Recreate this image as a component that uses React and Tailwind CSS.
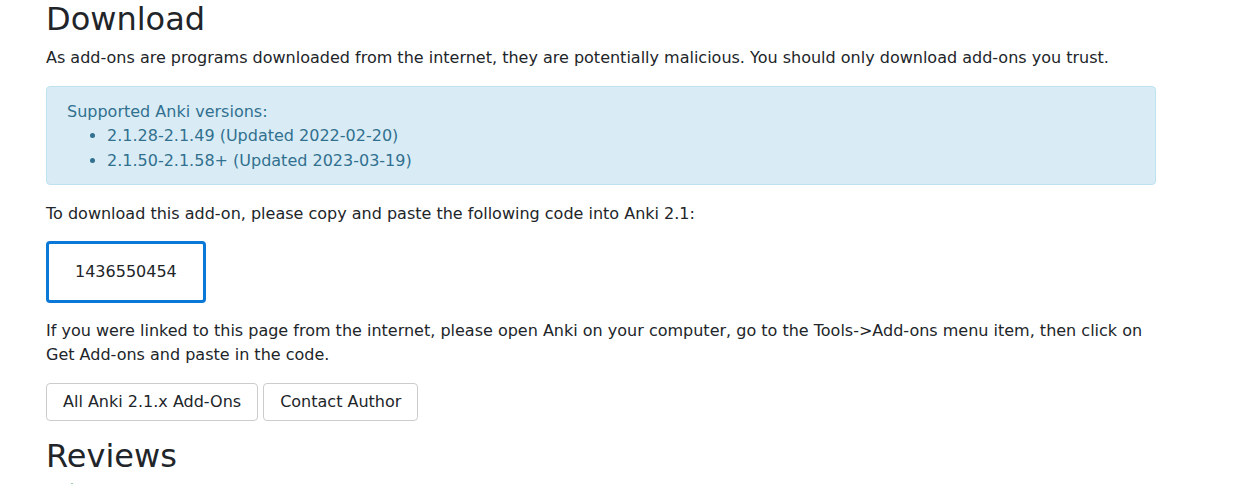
export default function App() {
  return (
    <div className="bg-white min-h-screen text-[#212529] text-[16px] leading-6" style={{ fontFamily: '"DejaVu Sans", sans-serif' }}>
      <div className="ml-[46px] w-[1110px]">
        <h2 className="text-[32px] leading-[38.4px] font-normal mb-2">Download</h2>
        <p className="mb-4">
          As add-ons are programs downloaded from the internet, they are potentially malicious. You should only download add-ons you trust.
        </p>
        <div className="bg-[#d9ecf5] border border-[#bee2f0] text-[#31708f] rounded px-5 pt-[13px] pb-[11px] mb-[17px]">
          <div>Supported Anki versions:</div>
          <ul className="list-disc pl-10 mb-0">
            <li className="leading-[24.5px]">2.1.28-2.1.49 (Updated 2022-02-20)</li>
            <li className="leading-[24.5px]">2.1.50-2.1.58+ (Updated 2023-03-19)</li>
          </ul>
        </div>
        <p className="mb-[15px]">To download this add-on, please copy and paste the following code into Anki 2.1:</p>
        <div className="inline-block border-[3px] border-[#0a78d7] rounded px-[26px] py-4 mb-4">1436550454</div>
        <p className="mb-4">
          If you were linked to this page from the internet, please open Anki on your computer, go to the Tools-&gt;Add-ons menu item, then click on Get Add-ons and paste in the code.
        </p>
        <div className="flex gap-[5px] mb-4">
          <button className="border border-[#cccccc] rounded px-4 py-[6px] leading-6 bg-white text-[#212529]">All Anki 2.1.x Add-Ons</button>
          <button className="border border-[#cccccc] rounded px-4 py-[6px] leading-6 bg-white text-[#212529]">Contact Author</button>
        </div>
        <h2 className="text-[32px] leading-[38.4px] font-normal mb-2">Reviews</h2>
        <div className="pl-[22px]">
          <svg width="8" height="16" viewBox="0 0 8 16" className="block -mt-[1px]">
            <path d="M4 0 L7.5 4 L0.5 4 Z" fill="#28a745" />
            <rect x="2.5" y="3.5" width="3" height="10" fill="#28a745" />
          </svg>
        </div>
      </div>
    </div>
  );
}
